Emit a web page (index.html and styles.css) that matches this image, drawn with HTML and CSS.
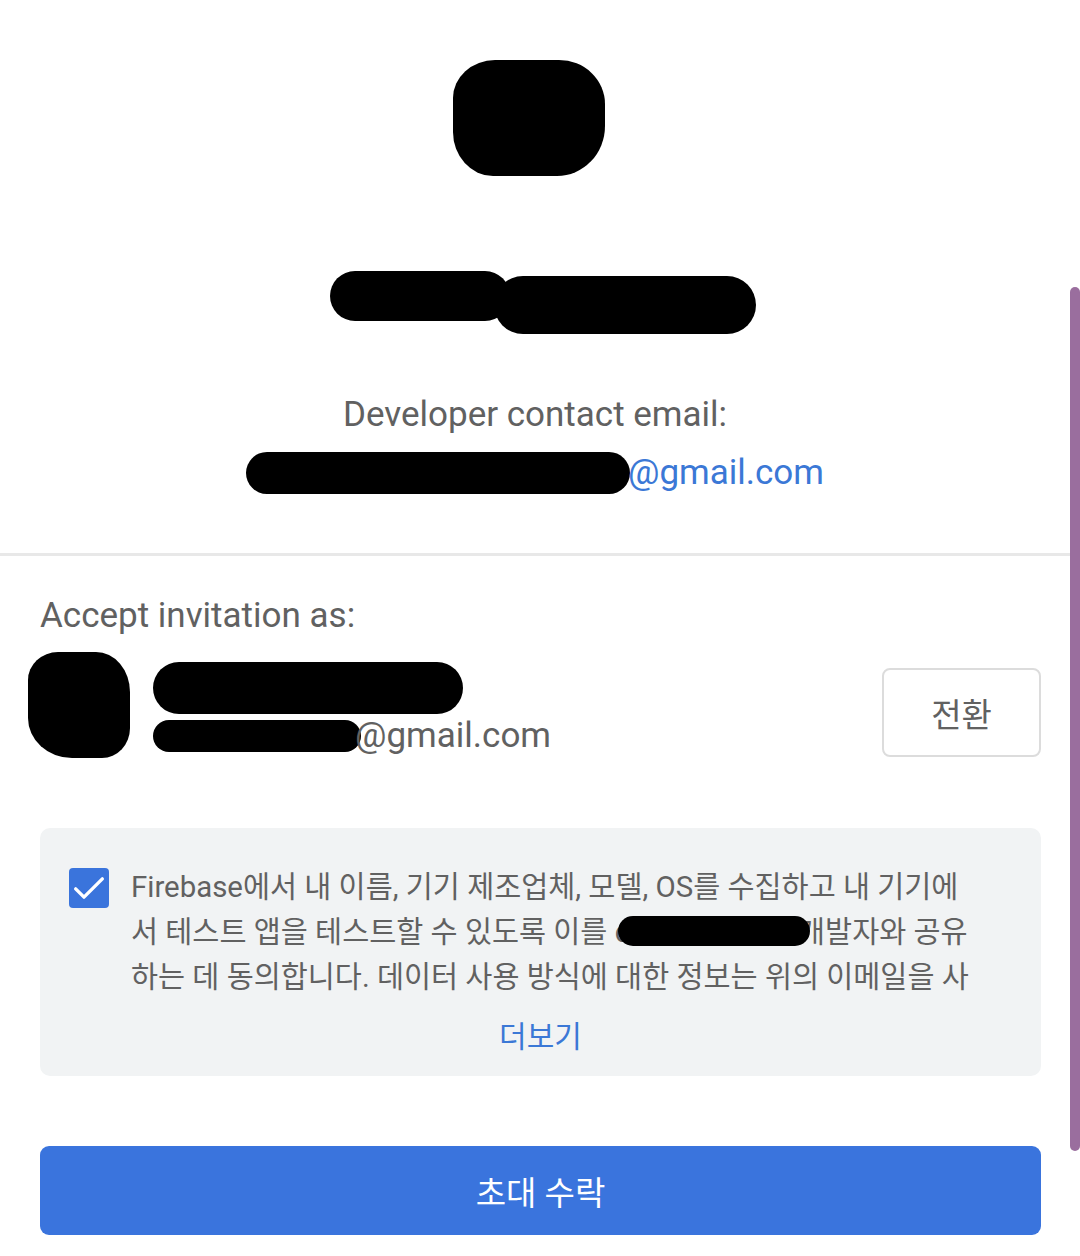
FILE: index.html
```html
<!DOCTYPE html>
<html lang="ko">
<head>
<meta charset="utf-8">
<title>Accept invitation</title>
<link rel="stylesheet" href="styles.css">
</head>
<body>
<div class="page">
  <section class="app">
    <div class="logo"></div>
    <div class="app-name"><span class="blob blob-name-a"></span><span class="blob blob-name-b"></span></div>
    <p class="dev-label">Developer contact email:</p>
    <p class="dev-email"><span class="blob blob-email"></span><a class="link">@gmail.com</a></p>
  </section>
  <hr class="divider">
  <section class="invite">
    <p class="invite-label">Accept invitation as:</p>
    <div class="account">
      <div class="avatar"></div>
      <div class="account-info">
        <div class="blob blob-user"></div>
        <div class="account-email"><span class="blob blob-prefix"></span>@gmail.com</div>
      </div>
      <button class="switch">전환</button>
    </div>
    <div class="consent">
      <div class="consent-row">
        <span class="checkbox">
          <svg viewBox="0 0 24 24" width="40" height="40"><path d="M4 12.5l5 5L20 6.5" fill="none" stroke="#fff" stroke-width="2" stroke-linecap="round" stroke-linejoin="round"/></svg>
        </span>
        <p class="consent-text">Firebase에서 내 이름, 기기 제조업체, 모델, OS를 수집하고 내 기기에서 테스트 앱을 테스트할 수 있도록 이를 c<span class="blob blob-dev"></span>개발자와 공유하는 데 동의합니다. 데이터 사용 방식에 대한 정보는 위의 이메일을 사용하여 개발자에게 문의하세요.</p>
      </div>
      <div class="more">더보기</div>
    </div>
    <button class="accept">초대 수락</button>
  </section>
</div>
<div class="scrollbar"></div>
</body>
</html>
```
FILE: styles.css
```css
* { box-sizing: border-box; }
html, body { margin: 0; padding: 0; background: #fff; }
body {
  font-family: Roboto, "Noto Sans CJK KR", sans-serif;
  color: #5f6368;
  width: 1080px;
  height: 1256px;
  overflow: hidden;
}
.page { width: 1070px; }
.app {
  display: flex;
  flex-direction: column;
  align-items: center;
  padding-top: 60px;
}
.logo {
  width: 152px;
  height: 116px;
  background: #000;
  border-radius: 42px 46px 48px 40px / 38px 44px 50px 44px;
  margin-left: -12px;
}
.blob { background: #000; display: inline-block; }
.app-name {
  margin-top: 92px;
  display: flex;
  align-items: center;
  margin-left: 16px;
}
.blob-name-a { width: 180px; height: 50px; border-radius: 25px; margin-top: -10px; }
.blob-name-b { width: 262px; height: 58px; border-radius: 29px; margin-left: -16px; margin-top: 8px; }
.dev-label {
  margin: 59px 0 0;
  font-size: 35px;
  line-height: 44px;
  color: #616161;
}
.dev-email {
  margin: 14px 0 0;
  font-size: 35px;
  line-height: 44px;
  display: flex;
  align-items: center;
}
.blob-email { width: 384px; height: 42px; border-radius: 21px; margin-right: -2px; }
.link { color: #3b78d6; }
.divider {
  border: 0;
  height: 3px;
  background: #e8e8e8;
  margin: 58px 0 0;
}
.invite { padding: 0 29px 0 40px; }
.invite-label {
  margin: 38px 0 0;
  font-size: 35px;
  line-height: 44px;
  color: #616161;
}
.account {
  display: flex;
  align-items: flex-start;
  margin-top: 14px;
  margin-left: -12px;
}
.avatar {
  width: 102px;
  height: 106px;
  background: #000;
  border-radius: 30px 34px 28px 44px / 28px 40px 30px 40px;
  flex: none;
}
.account-info { flex: 1; padding-left: 23px; padding-top: 10px; }
.blob-user { width: 310px; height: 52px; border-radius: 26px; display: block; }
.account-email {
  font-size: 35px;
  line-height: 44px;
  color: #616161;
  display: flex;
  align-items: center;
}
.blob-prefix { width: 208px; height: 32px; border-radius: 16px; margin-right: -6px; }
.switch {
  flex: none;
  width: 159px;
  height: 89px;
  margin-top: 16px;
  background: #fff;
  border: 2px solid #dcdcdc;
  border-radius: 8px;
  font-family: Roboto, "Noto Sans CJK KR", sans-serif;
  font-size: 33px;
  color: #616161;
}
.consent {
  margin-top: 70px;
  width: 1001px;
  background: #f1f3f4;
  border-radius: 10px;
  padding: 37px 29px 17px 29px;
}
.consent-row { display: flex; align-items: flex-start; gap: 22px; }
.checkbox {
  flex: none;
  width: 40px;
  height: 40px;
  margin-top: 3px;
  background: #3a74dc;
  border-radius: 4px;
  display: flex;
  align-items: center;
  justify-content: center;
}
.consent-text {
  margin: 0;
  font-size: 29.4px;
  line-height: 45px;
  color: #616161;
  width: 845px;
  height: 135px;
  overflow: hidden;
  word-break: break-all;
}
.blob-dev {
  position: relative;
  z-index: 1;
  width: 192px;
  height: 30px;
  border-radius: 15px;
  vertical-align: -4px;
  margin-left: -12px;
  margin-right: -12px;
}
.more {
  text-align: center;
  font-size: 30px;
  line-height: 44px;
  color: #3b78d6;
  margin-top: 15px;
}
.accept {
  display: block;
  width: 1001px;
  height: 89px;
  margin-top: 70px;
  background: #3a74dd;
  border: 0;
  border-radius: 9px;
  color: #fff;
  font-family: Roboto, "Noto Sans CJK KR", sans-serif;
  font-size: 33px;
}
.scrollbar {
  position: fixed;
  right: 0;
  top: 287px;
  width: 10px;
  height: 864px;
  background: #9a6e9e;
  border-radius: 5px;
}
```
